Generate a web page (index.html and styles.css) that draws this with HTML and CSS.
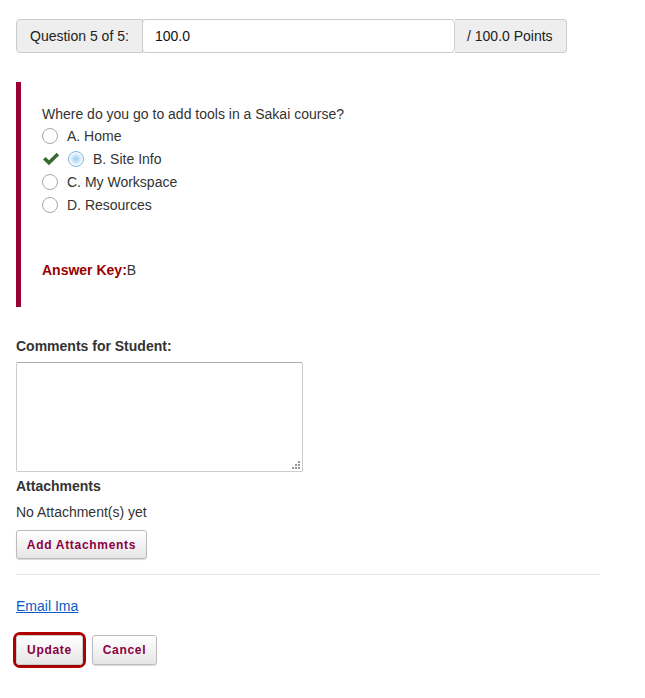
FILE: index.html
```html
<!DOCTYPE html>
<html>
<head>
<meta charset="utf-8">
<link rel="stylesheet" href="styles.css">
</head>
<body>
<div class="page">
  <div class="score-group">
    <span class="addon addon-left">Question 5 of 5:</span>
    <span class="score-input">100.0</span>
    <span class="addon addon-right">/ 100.0 Points</span>
  </div>

  <div class="question">
    <div class="q-text">Where do you go to add tools in a Sakai course?</div>
    <div class="option"><span class="radio"></span><span class="opt-label">A. Home</span></div>
    <div class="option">
      <svg class="check" width="18" height="14" viewBox="0 0 18 14"><path d="M1 7.5 L3.6 5 L7 8.2 L14.6 0.8 L17.2 3.3 L7 13.2 Z" fill="#356b32"/></svg>
      <span class="radio radio-on"></span><span class="opt-label">B. Site Info</span>
    </div>
    <div class="option"><span class="radio"></span><span class="opt-label">C. My Workspace</span></div>
    <div class="option"><span class="radio"></span><span class="opt-label">D. Resources</span></div>
    <div class="answer-key"><span class="ak-label">Answer Key:</span>B</div>
  </div>

  <div class="label">Comments for Student:</div>
  <textarea class="comments"></textarea>

  <div class="label label-att">Attachments</div>
  <div class="no-att">No Attachment(s) yet</div>
  <button class="btn btn-add">Add Attachments</button>

  <div class="rule"></div>

  <a class="email" href="#">Email Ima</a>

  <div class="actions">
    <span class="focus-ring"><button class="btn btn-update">Update</button></span>
    <button class="btn btn-cancel">Cancel</button>
  </div>
</div>
</body>
</html>
```

FILE: styles.css
```css
html, body {
  margin: 0;
  padding: 0;
  background: #fff;
}
body {
  font-family: "Liberation Sans", Arial, sans-serif;
  font-size: 14px;
  color: #333;
}
.page {
  padding: 19px 16px 20px 16px;
}
.score-group {
  display: flex;
  height: 34px;
  width: 551px;
}
.addon {
  display: flex;
  align-items: center;
  background: #eee;
  border: 1px solid #ccc;
  color: #222;
  padding: 0 12px;
  box-sizing: border-box;
}
.addon-left {
  width: 127px;
  padding-left: 13px;
  border-radius: 4px 0 0 4px;
}
.addon-right {
  width: 112px;
  border-radius: 0 4px 4px 0;
  border-left: none;
}
.score-input {
  display: flex;
  align-items: center;
  flex: 1;
  border: 1px solid #ccc;
  border-radius: 4px;
  padding-left: 12px;
  color: #111;
  background: #fff;
  margin-left: -1px;
}
.question {
  margin-top: 29px;
  border-left: 5px solid #990033;
  padding: 22px 0 25px 21px;
  height: 178px;
}
.q-text {
  line-height: 20px;
  color: #333;
}
.option {
  display: flex;
  align-items: center;
  height: 23px;
  color: #333;
}
.radio {
  width: 14px;
  height: 14px;
  border: 1px solid #a8a8a8;
  border-radius: 50%;
  background: #fff;
  margin-right: 9px;
  flex: none;
}
.radio-on {
  border-color: #7fb2e2;
  background: radial-gradient(circle, #9fcdf0 0, #c4e1f7 3px, #eef6fd 6px, #fff 7px);
}
.check {
  margin-right: 8px;
  flex: none;
}
.answer-key {
  margin-top: 44px;
  line-height: 20px;
  color: #333;
}
.ak-label {
  font-weight: bold;
  color: #990000;
}
.label {
  font-weight: bold;
  color: #333;
  margin-top: 29px;
  line-height: 20px;
}
.comments {
  display: block;
  margin-top: 6px;
  width: 287px;
  height: 110px;
  box-sizing: border-box;
  border: 1px solid #ccc;
  border-top-color: #aaa;
  border-radius: 2px;
  padding: 4px;
  font-family: inherit;
  resize: none;
  background-color: #fff;
  background-image:
    radial-gradient(circle, #999 0.8px, transparent 1px),
    radial-gradient(circle, #999 0.8px, transparent 1px),
    radial-gradient(circle, #999 0.8px, transparent 1px),
    radial-gradient(circle, #999 0.8px, transparent 1px),
    radial-gradient(circle, #999 0.8px, transparent 1px),
    radial-gradient(circle, #999 0.8px, transparent 1px);
  background-size: 2px 2px;
  background-repeat: no-repeat;
  background-position:
    right 2px bottom 2px,
    right 5px bottom 2px,
    right 8px bottom 2px,
    right 2px bottom 5px,
    right 5px bottom 5px,
    right 2px bottom 8px;
}
.label-att {
  margin-top: 4px;
}
.no-att {
  margin-top: 6px;
  line-height: 20px;
}
.btn {
  display: inline-block;
  height: 29px;
  padding: 0 10px;
  font-family: "Liberation Sans", Arial, sans-serif;
  font-size: 12px;
  font-weight: bold;
  letter-spacing: 0.7px;
  color: #8b0042;
  background: linear-gradient(#ffffff, #e6e6e6);
  border: 1px solid #bbb;
  border-radius: 3px;
  box-shadow: 0 1px 1px rgba(0,0,0,0.15);
  margin-top: 8px;
  cursor: pointer;
  box-sizing: border-box;
}
.btn-add {
  width: 131px;
  padding: 0;
}
.rule {
  margin-top: 15px;
  width: 584px;
  border-top: 1px solid #e5e5e5;
}
.email {
  display: inline-block;
  margin-top: 22px;
  color: #0a5bc7;
  text-decoration: underline;
  line-height: 18px;
}
.actions {
  display: flex;
  align-items: center;
  gap: 6px;
  margin-top: 17px;
  margin-left: -3px;
}
.focus-ring {
  display: inline-flex;
  border: 3px solid #b00000;
  border-radius: 7px;
}
.btn-update {
  margin: 0;
  width: 67px;
  height: 30px;
  padding: 0;
  border-color: #ccc;
}
.btn-cancel {
  margin: 0;
  width: 65px;
  height: 30px;
  padding: 0;
}
```
